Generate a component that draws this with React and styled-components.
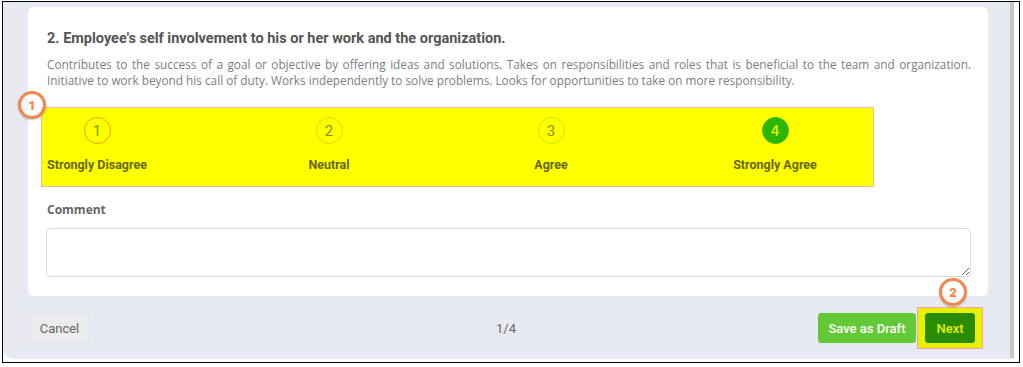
import React from "react";
import styled, { createGlobalStyle } from "styled-components";

const Global = createGlobalStyle`
  html, body { margin: 0; padding: 0; background: #ffffff; }
  * { box-sizing: border-box; }
`;

const Frame = styled.div`
  margin: 1px 0 0 2px;
  width: 1018px;
  height: 362px;
  border: 1px solid #000;
  display: flex;
  background: #fff;
`;

const Panel = styled.div`
  flex: 1;
  height: 357px;
  background: #e8eaf3;
  border-bottom-left-radius: 10px;
  padding: 5px 22px 0 25px;
  display: flex;
  flex-direction: column;
`;

const ScrollStrip = styled.div`
  width: 4px;
  height: 356px;
  background: #c6c6c6;
  margin-right: 5px;
`;

const Card = styled.div`
  background: #fff;
  border-radius: 6px;
  padding: 23px 17px 19px 18px;
  display: flex;
  flex-direction: column;
`;

const Title = styled.h2`
  margin: 0 0 0 1px;
  font-family: Roboto, "Liberation Sans", sans-serif;
  font-weight: 700;
  font-size: 14.5px;
  line-height: 18px;
  color: #555;
`;

const Desc = styled.p`
  margin: 8px 0 0 1px;
  font-family: "Open Sans", "Liberation Sans", sans-serif;
  font-size: 11.8px;
  line-height: 16px;
  color: #7e7e7e;
  text-align: justify;
`;

const Highlight = styled.div`
  position: relative;
  margin: 19px 0 0 -5px;
  width: 833px;
  height: 80px;
  background: #ffff00;
  border: 1px solid #f4b5a5;
  display: grid;
  grid-template-columns: 110px 134px 90px 138px;
  column-gap: 110px;
  padding: 9px 0 0 0;
`;

const Badge = styled.div`
  position: absolute;
  left: ${(p) => p.$left}px;
  top: ${(p) => p.$top}px;
  width: 28px;
  height: 28px;
  border-radius: 50%;
  border: 3px solid #f0874a;
  background: rgba(255, 255, 255, 0.55);
  box-shadow: 0 1px 2px rgba(0, 0, 0, 0.25);
  color: #f0874a;
  font-family: Roboto, "Liberation Sans", sans-serif;
  font-weight: 900;
  font-size: 13px;
  display: flex;
  align-items: center;
  justify-content: center;
  z-index: 2;
`;

const Option = styled.div`
  display: flex;
  flex-direction: column;
  align-items: center;
`;

const Circle = styled.div`
  width: 27px;
  height: 27px;
  border-radius: 50%;
  border: 1px solid ${(p) => p.$border};
  background: ${(p) => p.$fill || "transparent"};
  color: ${(p) => p.$color};
  font-family: Roboto, "Liberation Sans", sans-serif;
  font-size: 15px;
  display: flex;
  align-items: center;
  justify-content: center;
`;

const OptionLabel = styled.div`
  margin-top: 14px;
  font-family: Roboto, "Liberation Sans", sans-serif;
  font-weight: 700;
  font-size: 12.5px;
  line-height: 14px;
  color: #666600;
  white-space: nowrap;
`;

const FieldLabel = styled.label`
  margin: 15px 0 0 1px;
  font-family: "Open Sans", "Liberation Sans", sans-serif;
  font-weight: 700;
  font-size: 12px;
  line-height: 16px;
  color: #666;
`;

const TextArea = styled.textarea`
  margin-top: 10px;
  width: 925px;
  height: 49px;
  border: 1px solid #dcdcdc;
  border-radius: 4px;
  background: #fff;
  resize: vertical;
  display: block;
`;

const Footer = styled.div`
  margin-top: 11px;
  display: grid;
  grid-template-columns: 1fr auto 1fr;
  align-items: center;
  padding: 0 5px 0 1px;
`;

const Right = styled.div`
  display: flex;
  align-items: center;
  justify-content: flex-end;
  gap: 1px;
`;

const Button = styled.button`
  width: ${(p) => p.$w}px;
  height: 30px;
  padding: 0;
  border-radius: 3px;
  border: 1px solid ${(p) => p.$border};
  background: ${(p) => p.$bg};
  color: ${(p) => p.$color};
  font-family: Roboto, "Liberation Sans", sans-serif;
  font-size: 13px;
  font-weight: ${(p) => p.$weight || 400};
  cursor: pointer;
`;

const Pager = styled.span`
  font-family: Roboto, "Liberation Sans", sans-serif;
  font-size: 13px;
  color: #666;
`;

const NextHighlight = styled.div`
  position: relative;
  padding: 5px 7px;
  background: #e8ef00;
  border: 1px solid #f4a3a0;
`;

const options = [
  { n: 1, label: "Strongly Disagree", border: "#f0a000", color: "#6f9a00" },
  { n: 2, label: "Neutral", border: "#e2d800", color: "#8c8c00" },
  { n: 3, label: "Agree", border: "#c8e600", color: "#8c8c00" },
  { n: 4, label: "Strongly Agree", border: "#2db600", color: "#f4f400", fill: "#2db600" },
];

export default function App() {
  return (
    <>
      <Global />
      <Frame>
        <Panel>
          <Card>
            <Title>2. Employee's self involvement to his or her work and the organization.</Title>
            <Desc>
              Contributes to the success of a goal or objective by offering ideas and solutions. Takes on
              responsibilities and roles that is beneficial to the team and organization. Initiative to work
              beyond his call of duty. Works independently to solve problems. Looks for opportunities to take on
              more responsibility.
            </Desc>
            <Highlight>
              <Badge $left={-24} $top={-17}>1</Badge>
              {options.map((o) => (
                <Option key={o.n}>
                  <Circle $border={o.border} $color={o.color} $fill={o.fill}>
                    {o.n}
                  </Circle>
                  <OptionLabel>{o.label}</OptionLabel>
                </Option>
              ))}
            </Highlight>
            <FieldLabel>Comment</FieldLabel>
            <TextArea />
          </Card>
          <Footer>
            <div>
              <Button $w={61} $bg="#ececec" $border="#e2e2e2" $color="#666">Cancel</Button>
            </div>
            <Pager>1/4</Pager>
            <Right>
              <Button $w={98} $bg="#63c937" $border="#63c937" $color="#fff" $weight={500}>Save as Draft</Button>
              <NextHighlight>
                <Badge $left={21} $top={-30}>2</Badge>
                <Button $w={50} $bg="#2a8c00" $border="#2a8c00" $color="#e8f000" $weight={500}>Next</Button>
              </NextHighlight>
            </Right>
          </Footer>
        </Panel>
        <ScrollStrip />
      </Frame>
    </>
  );
}
